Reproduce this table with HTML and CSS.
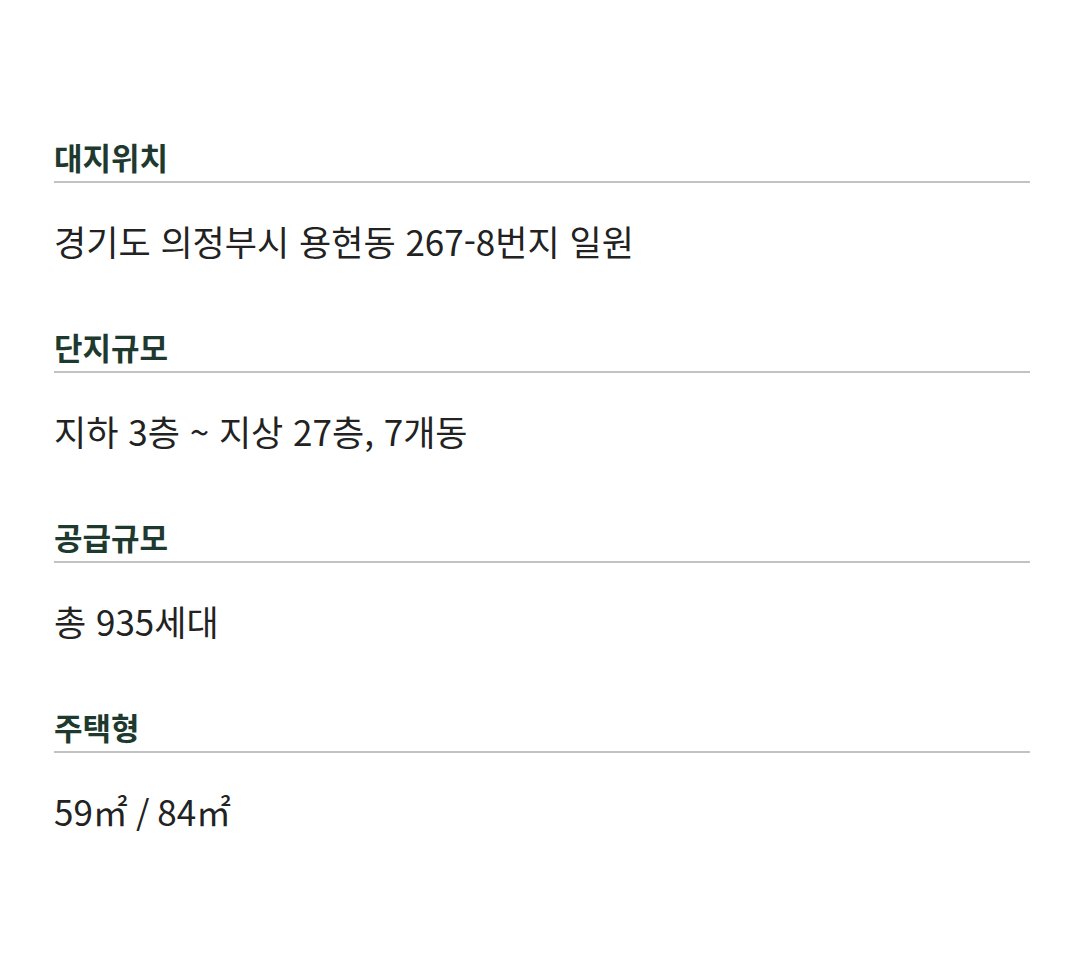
FILE: index.html
```html
<!DOCTYPE html>
<html lang="ko">
<head>
<meta charset="utf-8">
<title>사업개요</title>
<link rel="stylesheet" href="styles.css">
</head>
<body>
<main class="overview">
  <section class="item">
    <h3 class="item-title">대지위치</h3>
    <p class="item-value">경기도 의정부시 용현동 267-8번지 일원</p>
  </section>
  <section class="item">
    <h3 class="item-title">단지규모</h3>
    <p class="item-value">지하 3층 ~ 지상 27층, 7개동</p>
  </section>
  <section class="item">
    <h3 class="item-title">공급규모</h3>
    <p class="item-value">총 935세대</p>
  </section>
  <section class="item">
    <h3 class="item-title">주택형</h3>
    <p class="item-value">59㎡ / 84㎡</p>
  </section>
</main>
</body>
</html>
```

FILE: styles.css
```css
html, body {
  margin: 0;
  padding: 0;
  background: #ffffff;
}
body {
  font-family: "Noto Sans CJK KR", "Noto Sans", sans-serif;
}
.overview {
  padding: 137px 50px 0 54px;
  display: flex;
  flex-direction: column;
  gap: 66px;
}
.item {
  display: flex;
  flex-direction: column;
}
.item-title {
  margin: 0;
  font-size: 31px;
  line-height: 40px;
  font-weight: 700;
  color: #1e3a2f;
  padding-bottom: 4px;
  border-bottom: 2px solid #c2c2c2;
}
.item-value {
  margin: 38px 0 0;
  font-size: 35px;
  line-height: 40px;
  font-weight: 400;
  color: #222222;
}
```
